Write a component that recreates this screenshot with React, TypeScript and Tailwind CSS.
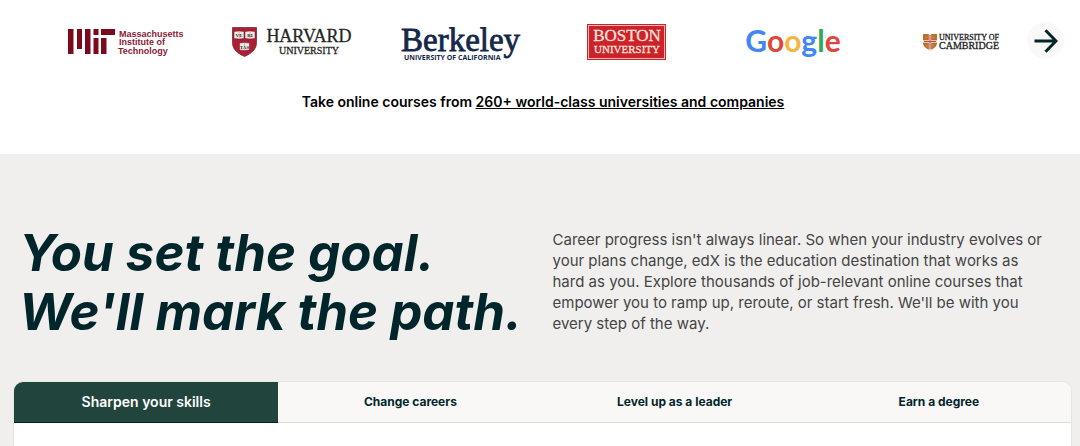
import React, { useState } from "react";

const serif = "font-['Liberation_Serif',serif]";

function MitLogo() {
  return (
    <svg viewBox="0 0 131 44" className="w-[131px] h-11" role="img" aria-label="MIT">
      <g fill="#7a0a1c">
        <rect x="8" y="9" width="5.5" height="25" />
        <rect x="17" y="9" width="5" height="20" />
        <rect x="25" y="9" width="5.5" height="25" />
        <rect x="33.5" y="9" width="5" height="6" />
        <rect x="33.5" y="18" width="5" height="16" />
        <rect x="41" y="9" width="14" height="6" />
        <rect x="41" y="18" width="5.5" height="16" />
      </g>
      <g fill="#8a2236" className="font-['Liberation_Sans',sans-serif] font-bold text-[9px]">
        <text x="59" y="17">Massachusetts</text>
        <text x="59" y="25">Institute of</text>
        <text x="58" y="34">Technology</text>
      </g>
    </svg>
  );
}

function Book({ x, y, label }: { x: number; y: number; label: string }) {
  return (
    <g>
      <path d={`M${x} ${y}l5-.6 5 .6v7l-5 .5-5-.5z`} fill="#f1e9e6" stroke="#5d1a24" strokeWidth=".5" />
      <path d={`M${x + 5} ${y - 0.5}v8`} stroke="#b98a8c" strokeWidth=".5" />
      <text x={x + 5} y={y + 5.5} textAnchor="middle" fill="#3b2a2c" className={`${serif} font-bold text-[5px]`}>
        {label}
      </text>
    </g>
  );
}

function HarvardLogo() {
  return (
    <svg viewBox="0 0 131 44" className="w-[131px] h-11" role="img" aria-label="Harvard University">
      <path
        d="M5.5 7.5h24v15c0 7-5 11-12 14-7-3-12-7-12-14z"
        fill="#b01c34"
        stroke="#6b3038"
        strokeWidth=".8"
      />
      <Book x={7} y={11.5} label="VE" />
      <Book x={18} y={11.5} label="RI" />
      <Book x={12.5} y={23} label="TAS" />
      <g fill="#262626" stroke="#262626" strokeWidth=".3" className={serif}>
        <text x="82" y="22" textAnchor="middle" className="text-[18px]">HARVARD</text>
        <text x="82" y="34" textAnchor="middle" className="text-[10px]">UNIVERSITY</text>
      </g>
    </svg>
  );
}

function BerkeleyLogo() {
  return (
    <svg viewBox="0 0 131 44" className="w-[131px] h-11" role="img" aria-label="Berkeley, University of California">
      <g fill="#14284b">
        <text x="7" y="31" stroke="#14284b" strokeWidth=".8" className={`${serif} text-[33px]`}>Berkeley</text>
        <text x="10" y="40" className="font-['Open_Sans',sans-serif] font-bold text-[7px]">UNIVERSITY OF CALIFORNIA</text>
      </g>
    </svg>
  );
}

function BostonLogo() {
  return (
    <svg viewBox="0 0 131 44" className="w-[131px] h-11" role="img" aria-label="Boston University">
      <rect x="26" y="4" width="79" height="36" fill="#cc2229" />
      <rect x="27.5" y="5.5" width="76" height="33" fill="none" stroke="#f0b9b5" />
      <g fill="#fbe3dc" stroke="#fbe3dc" strokeWidth=".3" textAnchor="middle" className={serif}>
        <text x="66" y="21" className="text-[17px]">BOSTON</text>
        <text x="66" y="33" className="text-[11px]">UNIVERSITY</text>
      </g>
    </svg>
  );
}

function GoogleLogo() {
  return (
    <svg viewBox="0 0 131 44" className="w-[131px] h-11" role="img" aria-label="Google">
      <text x="65" y="32" textAnchor="middle" className="font-['Lato',sans-serif] font-bold text-[30px]">
        <tspan fill="#4285f4">G</tspan>
        <tspan fill="#e0463b">o</tspan>
        <tspan fill="#f4b63f">o</tspan>
        <tspan fill="#4285f4">g</tspan>
        <tspan fill="#34a853">l</tspan>
        <tspan fill="#e0463b">e</tspan>
      </text>
    </svg>
  );
}

function CambridgeLogo() {
  return (
    <svg viewBox="0 0 131 44" className="w-[131px] h-11" role="img" aria-label="University of Cambridge">
      <path d="M28 14h14v9c0 3.5-3.5 5.5-7 7.5-3.5-2-7-4-7-7.5z" fill="#b5702d" />
      <path d="M35 14v16M28 21.5h14" stroke="#f3e3dc" strokeWidth="2.4" />
      <path d="M35 15v14M29 21.5h12" stroke="#c4473f" strokeWidth="1" />
      <path d="M30.5 16.5h2v2h-2zM37.5 16.5h2v2h-2zM31 24.5h2v2h-2zM37 24.5h2v2h-2z" fill="#c98536" />
      <g fill="#222" stroke="#222" strokeWidth=".3" className={serif}>
        <text x="44" y="20" className="text-[8px]">UNIVERSITY OF</text>
        <text x="44" y="29" className="text-[10px]">CAMBRIDGE</text>
      </g>
    </svg>
  );
}

const partners = [MitLogo, HarvardLogo, BerkeleyLogo, BostonLogo, GoogleLogo, CambridgeLogo];

const tabs = ["Sharpen your skills", "Change careers", "Level up as a leader", "Earn a degree"];

function Partners() {
  return (
    <section className="relative bg-white pt-5 pb-[43px] pl-[42px] pr-9">
      <ul className="grid grid-cols-6">
        {partners.map((Logo, i) => (
          <li key={i} className="flex justify-center">
            <Logo />
          </li>
        ))}
      </ul>
      <button
        aria-label="Next partners"
        className="absolute right-4 top-[22px] flex h-[37px] w-[37px] items-center justify-center rounded-full bg-[#faf9f7]"
      >
        <svg viewBox="0 0 24 24" className="h-6 w-6" fill="none" stroke="#00262b" strokeWidth="3">
          <path d="M.5 12h21.5M11.5 1.2L22 12 11.5 22.8" />
        </svg>
      </button>
      <p className="mt-[29px] text-center text-sm font-semibold leading-[18px] text-black">
        Take online courses from{" "}
        <a href="#partners" className="underline">
          260+ world-class universities and companies
        </a>
      </p>
    </section>
  );
}

function Goals() {
  const [active, setActive] = useState(0);

  return (
    <section className="bg-[#f0efed] pl-[13px] pr-2 pt-[69px]">
      <div className="grid grid-cols-2">
        <h2 className="pl-1.5 text-[51px] font-bold italic leading-[59px] text-[#00262b]">
          You set the goal.
          <br />
          We'll mark the path.
        </h2>
        <p className="pl-[10px] pr-6 pt-1.5 text-[15px] leading-[21px] text-[#454545]">
          Career progress isn't always linear. So when your industry evolves or your plans change, edX is the
          education destination that works as hard as you. Explore thousands of job-relevant online courses that
          empower you to ramp up, reroute, or start fresh. We'll be with you every step of the way.
        </p>
      </div>

      <div className="mt-10 overflow-hidden rounded-t-[10px] border border-b-0 border-[#e7e5e1] bg-white">
        <div role="tablist" className="grid grid-cols-4">
          {tabs.map((tab, i) => (
            <button
              key={tab}
              role="tab"
              aria-selected={active === i}
              onClick={() => setActive(i)}
              className={`h-[41px] border-b ${
                active === i
                  ? "border-[#00262b] bg-[#21453d] text-sm font-semibold text-white"
                  : "border-[#dedbd2] bg-[#f9f8f6] text-xs font-bold text-[#00262b]"
              }`}
            >
              {tab}
            </button>
          ))}
        </div>
        <div role="tabpanel" aria-label={tabs[active]} className="h-6" />
      </div>
    </section>
  );
}

export default function App() {
  return (
    <main className="font-['Inter',sans-serif]">
      <Partners />
      <Goals />
    </main>
  );
}
